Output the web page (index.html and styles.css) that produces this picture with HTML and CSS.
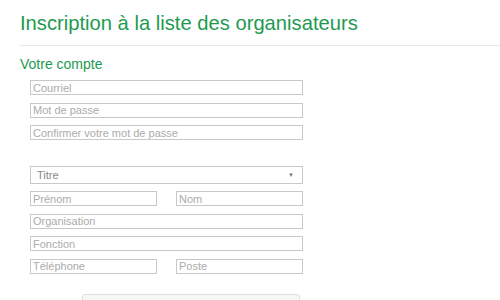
FILE: index.html
```html
<!DOCTYPE html>
<html lang="fr">
<head>
<meta charset="utf-8">
<title>Inscription</title>
<link rel="stylesheet" href="styles.css">
</head>
<body>
<div class="page">
  <h1 class="title">Inscription à la liste des organisateurs</h1>
  <div class="rule"></div>
  <h2 class="section">Votre compte</h2>
  <div class="group account">
    <input class="field" type="text" placeholder="Courriel">
    <input class="field" type="password" placeholder="Mot de passe">
    <input class="field" type="password" placeholder="Confirmer votre mot de passe">
  </div>
  <div class="group profile">
    <div class="select"><span>Titre</span><span class="arrow">▼</span></div>
    <div class="row">
      <input class="field half" type="text" placeholder="Prénom">
      <input class="field half" type="text" placeholder="Nom">
    </div>
    <input class="field" type="text" placeholder="Organisation">
    <input class="field" type="text" placeholder="Fonction">
    <div class="row">
      <input class="field half" type="text" placeholder="Téléphone">
      <input class="field half" type="text" placeholder="Poste">
    </div>
  </div>
  <div class="actions"><div class="button"></div></div>
</div>
</body>
</html>
```

FILE: styles.css
```css
html, body {
  margin: 0;
  padding: 0;
  background: #fff;
  font-family: "Liberation Sans", Arial, sans-serif;
  overflow: hidden;
}
.page {
  padding-left: 20px;
}
.title {
  margin: 0;
  padding-top: 12px;
  height: 44px;
  box-sizing: border-box;
  font-size: 20.2px;
  line-height: 22px;
  font-weight: normal;
  color: #1e9a50;
}
.rule {
  height: 1px;
  background: #e6e6e6;
  margin-top: 1px;
  margin-bottom: 10px;
}
.section {
  margin: 0;
  font-size: 14px;
  line-height: 16px;
  font-weight: normal;
  color: #1e9a50;
}
.group {
  display: flex;
  flex-direction: column;
  width: 273px;
  margin-left: 10px;
}
.account {
  margin-top: 8px;
  gap: 7.5px;
}
.profile {
  margin-top: 26px;
  gap: 7.5px;
}
.row {
  display: flex;
  justify-content: space-between;
}
.field {
  box-sizing: border-box;
  width: 273px;
  height: 15px;
  margin: 0;
  padding: 0 2px;
  border: 1px solid #c8c8c8;
  font-family: "Liberation Sans", Arial, sans-serif;
  font-size: 11px;
  color: #555;
  background: #fff;
  outline: none;
}
.field::placeholder {
  color: #ababab;
}
.half {
  width: 127px;
}
.select {
  box-sizing: border-box;
  height: 18px;
  border: 1px solid #c8c8c8;
  display: flex;
  justify-content: space-between;
  align-items: center;
  padding: 0 8px 0 6px;
  font-size: 11px;
  color: #888;
  margin-bottom: -0.5px;
}
.arrow {
  font-size: 6px;
  color: #777;
}
.actions {
  margin-top: 20px;
  margin-left: 62px;
}
.button {
  width: 218px;
  height: 24px;
  box-sizing: border-box;
  border: 1px solid #ddd;
  border-radius: 3px;
  background: #f7f7f7;
}
```
